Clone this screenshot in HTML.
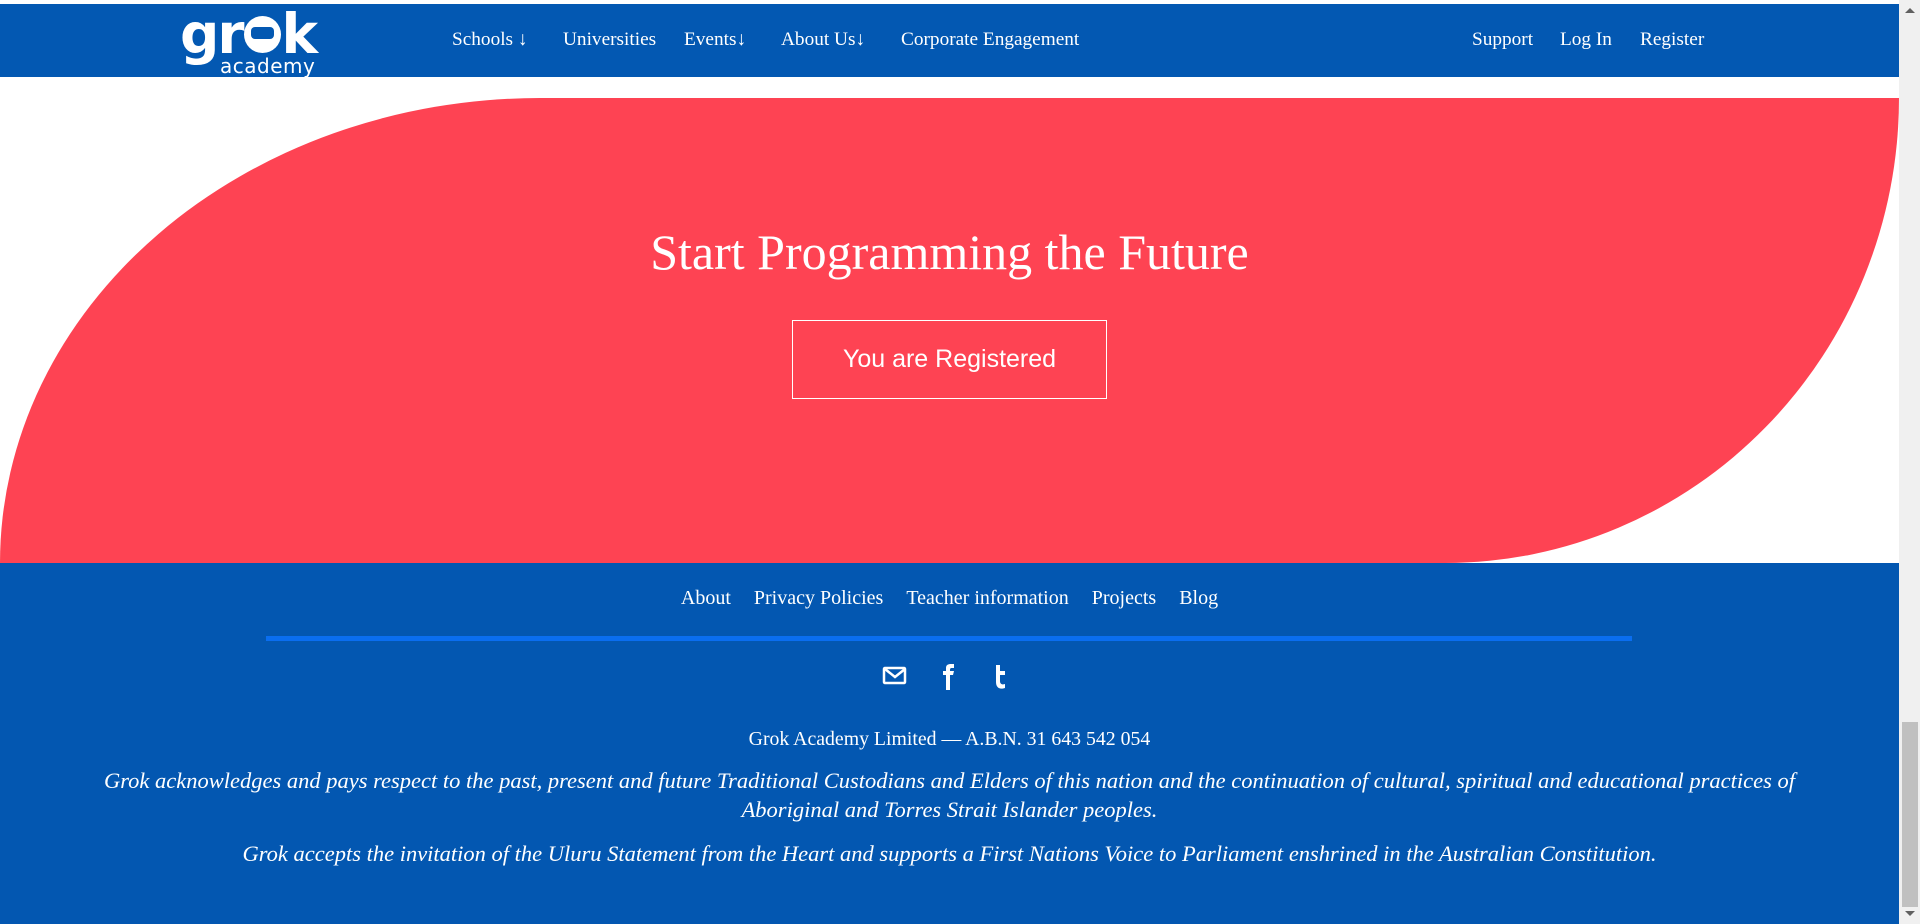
<!DOCTYPE html>
<html><head><meta charset="utf-8"><style>
*{margin:0;padding:0;box-sizing:border-box}
body{width:1920px;height:924px;overflow:hidden;background:#fff;font-family:"Liberation Serif",serif;position:relative}
.main{position:absolute;left:0;top:0;width:1899px;height:924px}
.nav{position:absolute;top:4px;left:0;width:1899px;height:73px;background:#0358b2;color:#fff}
.nav a{position:absolute;top:25px;font-size:19.3px;color:#fff;text-decoration:none;white-space:nowrap}
.logo{position:absolute;left:180px;top:5px;color:#fff;font-family:"DejaVu Sans",sans-serif}
.logo .g{font-size:55px;font-weight:bold;letter-spacing:-2px;line-height:50px;display:block}
.logo .a{font-size:20px;position:absolute;left:40px;top:45px;letter-spacing:0.5px}
.red{position:absolute;left:0;top:98px;width:1899px;height:465px;background:#fe4353;border-radius:540px 0 454px 0/465px 0 465px 0}
h1{position:absolute;top:223px;left:0;width:1899px;text-align:center;font-weight:normal;font-size:50px;color:#fff}
.btn{position:absolute;left:792px;top:320px;width:315px;height:79px;border:1px solid #fff;color:#fff;font-family:"Liberation Sans",sans-serif;font-size:25px;text-align:center;line-height:77px}
.foot{position:absolute;top:563px;left:0;width:1899px;height:361px;background:#0357b1;color:#fff;text-align:center}
.links{position:absolute;top:24px;width:100%;font-size:20px}
.links span{margin:0 11.5px}
.line{position:absolute;left:266px;top:73px;width:1366px;height:5px;background:#0a6ef0}
.icons{position:absolute;top:100px;left:0;width:100%}
.abn{position:absolute;top:165px;width:100%;font-size:19.8px}
.p{position:absolute;width:100%;font-style:italic;font-size:22.5px;line-height:29px}
.sb{position:absolute;left:1899px;top:0;width:21px;height:924px;background:#f0f0f0}
.thumb{position:absolute;left:3px;top:722px;width:16px;height:185px;background:#c0c0c0}
</style></head><body>
<div class="main">
<div class="red"></div>
<div class="nav">
<div class="logo"><span class="g">gr<span style="display:inline-block;width:37px;height:37px;border-radius:50%;background:#fff;position:relative;margin:0 1px"><span style="position:absolute;left:7px;top:11px;width:23px;height:12px;border-radius:4px;background:#0358b2"></span></span>k</span><span class="a">academy</span></div>
<a style="left:452px">Schools ↓</a>
<a style="left:563px">Universities</a>
<a style="left:684px">Events↓</a>
<a style="left:781px">About Us↓</a>
<a style="left:901px">Corporate Engagement</a>
<a style="left:1472px">Support</a>
<a style="left:1560px">Log In</a>
<a style="left:1640px">Register</a>
</div>
<h1>Start Programming the Future</h1>
<div class="btn">You are Registered</div>
<div class="foot">
<div class="links"><span>About</span><span>Privacy Policies</span><span>Teacher information</span><span>Projects</span><span>Blog</span></div>
<div class="line"></div>
<div class="icons">
<svg width="1899" height="28" viewBox="0 0 1899 28">
<g fill="none" stroke="#fff" stroke-width="2.5"><rect x="884" y="5" width="21" height="15" rx="1"/><path d="M885 6l10 8 10-8"/></g>
<path d="M946 27V12h-3V8h3V5c0-3 2-4 5-4h3v4h-2c-1 0-2 0-2 2v1h4l-1 4h-3v15z" fill="#fff"/>
<path d="M996 2h4v6h5v4h-5v6c0 3 2 4 5 3v4c-6 2-9-1-9-6z" fill="#fff"/>
</svg></div>
<div class="abn">Grok Academy Limited — A.B.N. 31 643 542 054</div>
<div class="p" style="top:203px">Grok acknowledges and pays respect to the past, present and future Traditional Custodians and Elders of this nation and the continuation of cultural, spiritual and educational practices of<br>Aboriginal and Torres Strait Islander peoples.</div>
<div class="p" style="top:276px">Grok accepts the invitation of the Uluru Statement from the Heart and supports a First Nations Voice to Parliament enshrined in the Australian Constitution.</div>
</div>
</div>
<div class="sb"><div style="position:absolute;left:6px;top:8px;border:5px solid transparent;border-bottom:5px solid #606060;border-top:0"></div><div class="thumb"></div><div style="position:absolute;left:6px;top:911px;border:5px solid transparent;border-top:5px solid #606060;border-bottom:0"></div></div>
</body></html>
